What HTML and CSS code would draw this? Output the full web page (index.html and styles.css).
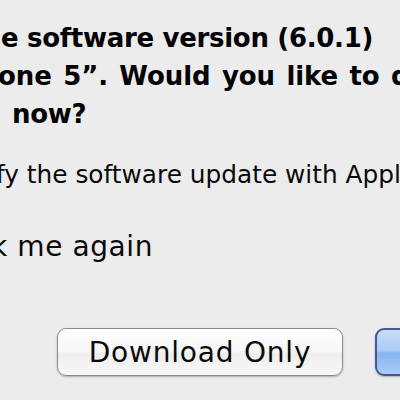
FILE: index.html
```html
<!DOCTYPE html>
<html>
<head>
<meta charset="utf-8">
<link rel="stylesheet" href="styles.css">
</head>
<body>
<div class="dialog">
  <div class="message">
    <p class="msg-line l1">e software version (6.0.1)</p>
    <p class="msg-line l2">one 5”. Would you like to download</p>
    <p class="msg-line l3">now?</p>
  </div>
  <p class="info">fy the software update with Apple.</p>
  <p class="check">ask me again</p>
  <div class="buttons">
    <button class="btn">Download Only</button>
    <button class="btn primary">Download and Update</button>
  </div>
</div>
</body>
</html>
```
FILE: styles.css
```css
html, body {
  margin: 0;
  padding: 0;
  overflow: hidden;
  background: #ececec;
}
.dialog {
  width: 400px;
  height: 400px;
  overflow: hidden;
  padding-top: 19px;
  box-sizing: border-box;
  font-family: "DejaVu Sans", sans-serif;
  color: #0a0a0a;
}
.message {
  font-size: 26px;
  font-weight: bold;
  line-height: 38px;
  letter-spacing: -0.3px;
  color: #000;
}
.msg-line {
  margin: 0;
  white-space: nowrap;
}
.l1 { margin-left: 1px; }
.l2 { margin-left: -2px; letter-spacing: -0.1px; word-spacing: 2.5px; }
.l3 { margin-left: 12px; }
.info {
  margin: 27px 0 0 -4px;
  font-size: 24.8px;
  line-height: 30px;
  white-space: nowrap;
}
.check {
  margin: 41px 0 0 -42px;
  font-size: 28px;
  line-height: 32px;
  letter-spacing: 0.6px;
  white-space: nowrap;
}
.buttons {
  display: flex;
  gap: 32px;
  margin-top: 65px;
  padding-left: 57px;
  white-space: nowrap;
}
.btn {
  flex: none;
  box-sizing: border-box;
  height: 48px;
  width: 286px;
  padding: 0;
  border: 1px solid #8a8a8a;
  border-radius: 9px;
  background: linear-gradient(#ffffff, #f7f7f7 50%, #eeeeee 52%, #f8f8f8);
  box-shadow: 0 1px 2px rgba(0,0,0,0.25);
  font-family: "DejaVu Sans", sans-serif;
  font-size: 28px;
  letter-spacing: 0.8px;
  color: #0a0a0a;
}
.primary {
  width: 380px;
  border: 2px solid #4a5690;
  background: linear-gradient(#c9ddf7, #a8c9f2 48%, #88b4ee 52%, #a9cdf6);
}
```
